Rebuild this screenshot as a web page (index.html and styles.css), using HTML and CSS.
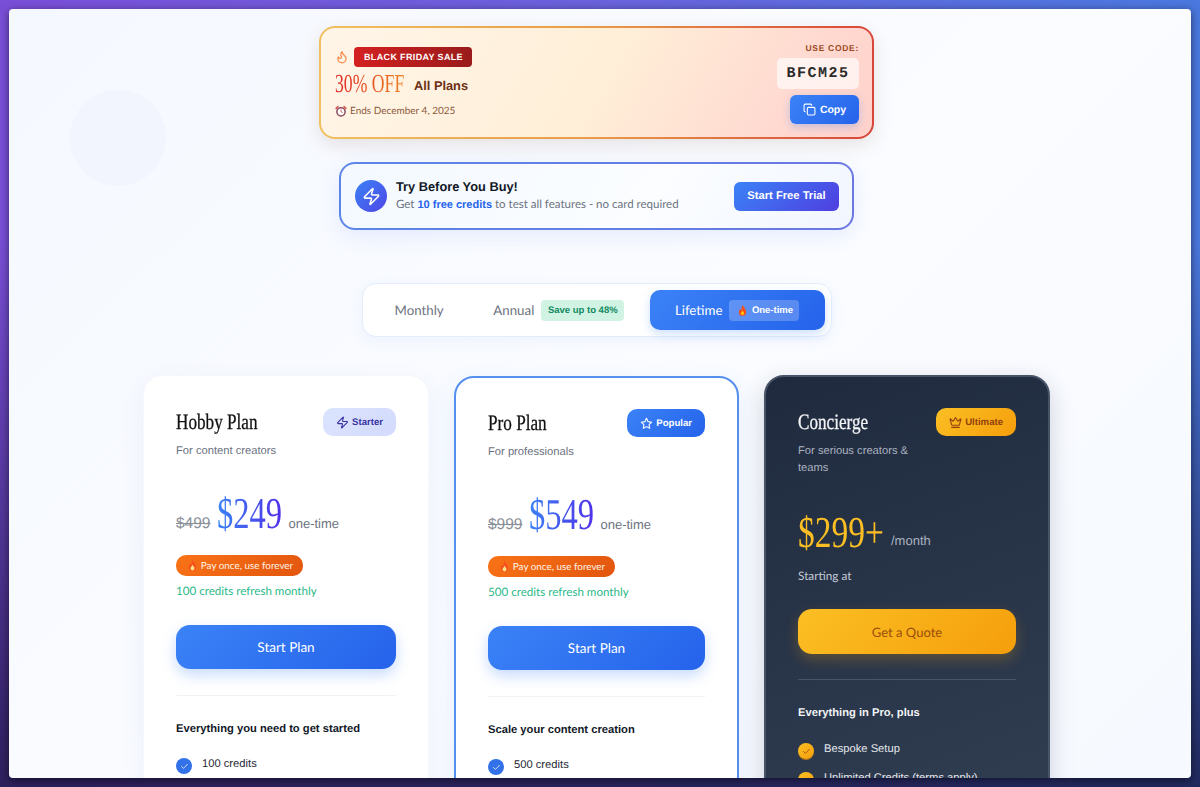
FILE: index.html
```html
<!DOCTYPE html>
<html lang="en">
<head>
    <meta charset="UTF-8">
    <meta name="viewport" content="width=device-width, initial-scale=1.0">
    <title>Pricing</title>
    <link rel="stylesheet" href="styles.css">
</head>
<body>
    <div class="window">
        <div class="bg-circle"></div>
        <div class="page">

            <div class="promo">
                <div class="promo-left">
                    <div class="promo-top">
                        <svg class="promo-flame" viewBox="0 0 24 24"><path d="M8.5 14.5A2.5 2.5 0 0 0 11 12c0-1.38-.5-2-1-3-1.07-2.14-.22-4.05 2-6 .5 2.5 2 4.9 4 6.5 2 1.6 3 3.5 3 5.5a7 7 0 1 1-14 0c0-1.15.43-2.29 1-3a2.5 2.5 0 0 0 2.500 2.500z"/></svg>
                        <span class="sale-badge">BLACK FRIDAY SALE</span>
                    </div>
                    <div class="promo-main">
                        <span class="serif-wrap off-wrap"><span class="serif off">30% OFF</span></span>
                        <span class="all-plans">All Plans</span>
                    </div>
                    <div class="promo-ends">
                        <svg class="alarm" viewBox="0 0 16 16"><circle cx="8" cy="9" r="5.500" fill="#fff" stroke="#8a4b5c" stroke-width="2"/><path d="M8 6v3l2 1" fill="none" stroke="#c0392b" stroke-width="1"/><path d="M1.500 4.500 4 2M14.500 4.500 12 2" stroke="#d9534f" stroke-width="2" stroke-linecap="round"/></svg>
                        Ends December 4, 2025
                    </div>
                </div>
                <div class="promo-right">
                    <div class="use-code">USE CODE:</div>
                    <div class="code">BFCM25</div>
                    <button class="copy-btn">
                        <svg viewBox="0 0 24 24"><rect x="8" y="8" width="14" height="14" rx="2"/><path d="M4 16c-1.100 0-2-.9-2-2V4c0-1.100.9-2 2-2h10c1.100 0 2 .9 2 2"/></svg>
                        Copy
                    </button>
                </div>
            </div>

            <div class="trial">
                <div class="trial-icon">
                    <svg viewBox="0 0 24 24"><path d="M4 14a1 1 0 0 1-.78-1.630l9.900-10.200a.5.5 0 0 1 .86.460l-1.920 6.020A1 1 0 0 0 13 10h7a1 1 0 0 1 .78 1.630l-9.900 10.200a.5.5 0 0 1-.86-.460l1.920-6.020A1 1 0 0 0 11 14z"/></svg>
                </div>
                <div class="trial-text">
                    <div class="trial-title">Try Before You Buy!</div>
                    <div class="trial-sub">Get <strong>10 free credits</strong> to test all features - no card required</div>
                </div>
                <button class="trial-btn">Start Free Trial</button>
            </div>

            <div class="tabs">
                <div class="tab tab-monthly">Monthly</div>
                <div class="tab tab-annual">Annual <span class="save-badge">Save up to 48%</span></div>
                <div class="tab tab-active">Lifetime
                    <span class="once-badge">
                        <svg class="fire" viewBox="0 0 16 16"><path d="M8 1c.5 2.500 4.500 4.500 4.500 9a4.500 4.500 0 0 1-9 0c0-2 1-3 1.500-4 .5 1 1 1.500 1.500 1.500C7 5 7 3 8 1z" fill="#f4511e"/><path d="M8 8c.5 1.300 2 2 2 3.500a2 2 0 0 1-4 0C6 10 7.500 9.500 8 8z" fill="#ffc107"/></svg>
                        One-time
                    </span>
                </div>
            </div>

            <div class="cards">
                <div class="card">
                    <div class="card-head">
                        <div class="card-name">
                            <span class="serif-wrap title-wrap"><span class="serif card-title">Hobby Plan</span></span>
                            <div class="card-desc">For content creators</div>
                        </div>
                        <span class="plan-badge badge-starter">
                            <svg viewBox="0 0 24 24"><path d="M4 14a1 1 0 0 1-.78-1.630l9.900-10.200a.5.5 0 0 1 .86.460l-1.920 6.020A1 1 0 0 0 13 10h7a1 1 0 0 1 .78 1.630l-9.900 10.200a.5.5 0 0 1-.86-.460l1.920-6.020A1 1 0 0 0 11 14z"/></svg>
                            Starter
                        </span>
                    </div>
                    <div class="price-row">
                        <span class="old-price">$499</span>
                        <span class="serif-wrap price-wrap"><span class="serif price">$249</span></span>
                        <span class="period">one-time</span>
                    </div>
                    <div class="pay-pill">
                        <svg class="fire" viewBox="0 0 16 16"><path d="M8 1c.5 2.500 4.500 4.500 4.500 9a4.500 4.500 0 0 1-9 0c0-2 1-3 1.500-4 .5 1 1 1.500 1.500 1.500C7 5 7 3 8 1z" fill="#f4511e"/><path d="M8 7c.5 1.500 2.500 2.500 2.500 4.500a2.500 2.500 0 0 1-5 0C5.500 10 7.500 9 8 7z" fill="#ffe082"/></svg>
                        Pay once, use forever
                    </div>
                    <div class="refresh">100 credits refresh monthly</div>
                    <button class="plan-btn">Start Plan</button>
                    <div class="divider"></div>
                    <div class="feat-head">Everything you need to get started</div>
                    <ul class="feats">
                        <li><span class="check"><svg viewBox="0 0 24 24"><path d="M20 6 9 17l-5-5"/></svg></span>100 credits</li>
                    </ul>
                </div>

                <div class="card card-pro">
                    <div class="card-head">
                        <div class="card-name">
                            <span class="serif-wrap title-wrap-pro"><span class="serif card-title">Pro Plan</span></span>
                            <div class="card-desc">For professionals</div>
                        </div>
                        <span class="plan-badge badge-popular">
                            <svg viewBox="0 0 24 24"><path d="M12 2.500l2.950 6.100 6.650.95-4.800 4.700 1.130 6.650L12 17.750 6.070 20.900l1.130-6.650-4.800-4.700 6.650-.95z"/></svg>
                            Popular
                        </span>
                    </div>
                    <div class="price-row">
                        <span class="old-price">$999</span>
                        <span class="serif-wrap price-wrap"><span class="serif price">$549</span></span>
                        <span class="period">one-time</span>
                    </div>
                    <div class="pay-pill">
                        <svg class="fire" viewBox="0 0 16 16"><path d="M8 1c.5 2.500 4.500 4.500 4.500 9a4.500 4.500 0 0 1-9 0c0-2 1-3 1.500-4 .5 1 1 1.500 1.500 1.500C7 5 7 3 8 1z" fill="#f4511e"/><path d="M8 7c.5 1.500 2.500 2.500 2.500 4.500a2.500 2.500 0 0 1-5 0C5.500 10 7.500 9 8 7z" fill="#ffe082"/></svg>
                        Pay once, use forever
                    </div>
                    <div class="refresh">500 credits refresh monthly</div>
                    <button class="plan-btn">Start Plan</button>
                    <div class="divider"></div>
                    <div class="feat-head">Scale your content creation</div>
                    <ul class="feats">
                        <li><span class="check"><svg viewBox="0 0 24 24"><path d="M20 6 9 17l-5-5"/></svg></span>500 credits</li>
                    </ul>
                </div>

                <div class="card card-dark">
                    <div class="card-head">
                        <div class="card-name">
                            <span class="serif-wrap title-wrap-dark"><span class="serif card-title">Concierge</span></span>
                            <div class="card-desc">For serious creators &amp; teams</div>
                        </div>
                        <span class="plan-badge badge-ultimate">
                            <svg viewBox="0 0 24 24"><path d="M11.560 3.270a.5.5 0 0 1 .88 0l2.950 5.600a1 1 0 0 0 1.520.3l4.280-3.670a.5.5 0 0 1 .8.520l-2.830 10.240a1 1 0 0 1-.96.740H5.800a1 1 0 0 1-.96-.74L2.010 6.020a.5.5 0 0 1 .8-.52l4.280 3.670a1 1 0 0 0 1.520-.3z"/><path d="M5 21h14"/></svg>
                            Ultimate
                        </span>
                    </div>
                    <div class="price-row price-row-dark">
                        <span class="serif-wrap price-wrap-dark"><span class="serif price price-gold">$299+</span></span>
                        <span class="period">/month</span>
                    </div>
                    <div class="starting">Starting at</div>
                    <button class="plan-btn quote-btn">Get a Quote</button>
                    <div class="divider"></div>
                    <div class="feat-head">Everything in Pro, plus</div>
                    <ul class="feats">
                        <li><span class="check"><svg viewBox="0 0 24 24"><path d="M20 6 9 17l-5-5"/></svg></span>Bespoke Setup</li>
                        <li><span class="check"><svg viewBox="0 0 24 24"><path d="M20 6 9 17l-5-5"/></svg></span>Unlimited Credits (terms apply)</li>
                    </ul>
                </div>
            </div>

        </div>
    </div>
</body>
</html>
```

FILE: styles.css
```css
* {
    box-sizing: border-box;
}
html, body {
    height: 787px;
    margin: 0;
    overflow: hidden;
}
body {
    padding: 9px;
    background: linear-gradient(180deg, rgba(20, 15, 50, 0) 30%, rgba(20, 15, 50, 0.75) 100%), linear-gradient(90deg, #7a4fd8 0%, #6a62dc 50%, #4a78de 100%);
    font-family: "Liberation Sans", Arial, sans-serif;
    color: #111827;
    text-rendering: geometricPrecision;
}
button {
    border: none;
    cursor: pointer;
    font-family: inherit;
    text-rendering: inherit;
}

.window {
    position: relative;
    height: 769px;
    overflow: hidden;
    border-radius: 4px;
    background: linear-gradient(135deg, #f5f8ff 0%, #fafcff 55%, #f6f9ff 100%);
    box-shadow: 0 2px 8px rgba(0, 0, 0, 0.55);
}
.bg-circle {
    position: absolute;
    left: 61px;
    top: 81px;
    width: 96px;
    height: 96px;
    border-radius: 50%;
    background: #f2f4fe;
}
.page {
    position: relative;
    width: 1175px;
    padding-top: 17px;
    display: flex;
    flex-direction: column;
    align-items: center;
}

/* condensed serif display text */
.serif-wrap {
    display: inline-block;
}
.serif {
    display: inline-block;
    font-family: "Liberation Serif", "Times New Roman", serif;
    transform-origin: left center;
    white-space: nowrap;
}

/* black friday banner */
.promo {
    width: 555px;
    height: 113px;
    padding: 19px 13px 0 14px;
    display: flex;
    justify-content: space-between;
    border: 2px solid transparent;
    border-radius: 16px;
    background: linear-gradient(120deg, #fff5e8 0%, #ffefd8 50%, #ffd8d0 85%, #ffd2cb 100%) padding-box, linear-gradient(90deg, #f0c060 0%, #e99a48 50%, #d8463a 100%) border-box;
    box-shadow: 0 6px 18px rgba(120, 80, 60, 0.14);
}
.promo-top {
    display: flex;
    align-items: center;
    gap: 5px;
    height: 20px;
}
.promo-flame {
    width: 14px;
    height: 14px;
    fill: none;
    stroke: #f98a4a;
    stroke-width: 2.200;
    stroke-linecap: round;
    stroke-linejoin: round;
}
.sale-badge {
    height: 20px;
    padding: 0 9px 0 10px;
    display: flex;
    align-items: center;
    border-radius: 4px;
    background: linear-gradient(90deg, #d42020, #991b1b);
    color: #fff;
    font-size: 9px;
    font-weight: bold;
    letter-spacing: 0.35px;
}
.promo-main {
    height: 31px;
    margin-top: 1px;
    display: flex;
    align-items: center;
}
.off-wrap {
    width: 69px;
    margin-right: 10px;
}
.off {
    font-size: 26px;
    transform: scaleX(0.68);
    background: linear-gradient(90deg, #dc2626, #f08020);
    -webkit-background-clip: text;
    background-clip: text;
    color: transparent;
}
.all-plans {
    margin-top: 4px;
    font-size: 12.800px;
    font-weight: bold;
    color: #6b2f12;
}
.promo-ends {
    margin-top: 6px;
    display: flex;
    align-items: center;
    gap: 3px;
    font-family: "Lato", "Noto Sans", sans-serif;
    font-size: 10px;
    color: #8b5a3c;
}
.alarm {
    width: 12px;
    height: 12px;
}
.promo-right {
    display: flex;
    flex-direction: column;
    align-items: flex-end;
}
.use-code {
    margin-top: -4px;
    font-size: 8.500px;
    font-weight: bold;
    letter-spacing: 0.7px;
    color: #9a4a1c;
}
.code {
    width: 82px;
    height: 31px;
    margin-top: 5px;
    display: flex;
    align-items: center;
    justify-content: center;
    border-radius: 5px;
    background: rgba(255, 255, 255, 0.65);
    font-family: "Liberation Mono", "Courier New", monospace;
    font-size: 15px;
    font-weight: bold;
    letter-spacing: 1.500px;
    color: #2b2b2b;
}
.copy-btn {
    width: 69px;
    height: 29px;
    margin-top: 6px;
    display: flex;
    align-items: center;
    justify-content: center;
    gap: 4px;
    border-radius: 6px;
    background: linear-gradient(135deg, #3b82f6, #2563eb);
    color: #fff;
    font-size: 10.500px;
    font-weight: bold;
    box-shadow: 0 3px 8px rgba(59, 130, 246, 0.3);
}
.copy-btn svg {
    width: 13px;
    height: 13px;
    fill: none;
    stroke: #fff;
    stroke-width: 2;
    stroke-linecap: round;
    stroke-linejoin: round;
}

/* free trial banner */
.trial {
    width: 515px;
    height: 68px;
    margin-top: 23px;
    padding: 0 13px 0 14px;
    display: flex;
    align-items: center;
    border: 2px solid transparent;
    border-radius: 16px;
    background: linear-gradient(120deg, #f3f9ff, #fbfdff 60%, #f2f6ff) padding-box, linear-gradient(90deg, #5c86e6, #6a78e0) border-box;
    box-shadow: 0 6px 20px rgba(80, 120, 240, 0.12);
}
.trial-icon {
    width: 32px;
    height: 32px;
    flex-shrink: 0;
    display: flex;
    align-items: center;
    justify-content: center;
    border-radius: 50%;
    background: linear-gradient(135deg, #3b82f6, #4f46e5);
}
.trial-icon svg {
    width: 19px;
    height: 19px;
    fill: none;
    stroke: #fff;
    stroke-width: 2;
    stroke-linecap: round;
    stroke-linejoin: round;
}
.trial-text {
    flex: 1;
    margin-left: 9px;
    margin-bottom: 2px;
}
.trial-title {
    font-size: 12.800px;
    font-weight: bold;
    color: #111827;
}
.trial-sub {
    margin-top: 4px;
    font-family: "Lato", "Noto Sans", sans-serif;
    font-size: 11.500px;
    color: #6b7280;
}
.trial-sub strong {
    font-family: "Liberation Sans", Arial, sans-serif;
    font-size: 11px;
    color: #2563eb;
}
.trial-btn {
    width: 105px;
    height: 29px;
    border-radius: 6px;
    background: linear-gradient(135deg, #3b82f6, #4f3fe0);
    color: #fff;
    font-size: 11.200px;
    font-weight: bold;
}

/* billing tabs */
.tabs {
    width: 470px;
    height: 54px;
    margin-top: 53px;
    padding: 0 6px;
    display: flex;
    align-items: center;
    border: 1px solid #e3edfb;
    border-radius: 14px;
    background: #fff;
    box-shadow: 0 4px 14px rgba(90, 130, 240, 0.07);
    font-family: "Lato", "Noto Sans", sans-serif;
    font-size: 13.300px;
    color: #6b7280;
}
.tab {
    height: 40px;
    display: flex;
    align-items: center;
}
.tab-monthly {
    width: 106px;
    padding-left: 26px;
    padding-bottom: 1px;
}
.tab-annual {
    width: 176px;
    padding-left: 19px;
    gap: 7px;
}
.save-badge {
    height: 21px;
    width: 83px;
    display: flex;
    align-items: center;
    justify-content: center;
    border-radius: 4px;
    background: #d1f3e4;
    color: #0f8a5f;
    font-family: "Liberation Sans", Arial, sans-serif;
    font-size: 9.500px;
    font-weight: bold;
}
.tab-active {
    width: 175px;
    padding-left: 25px;
    gap: 7px;
    border-radius: 10px;
    background: linear-gradient(135deg, #3b82f6, #2563eb);
    color: #fff;
    box-shadow: 0 4px 10px rgba(59, 130, 246, 0.25);
}
.once-badge {
    height: 21px;
    width: 70px;
    display: flex;
    align-items: center;
    justify-content: center;
    gap: 3px;
    border-radius: 4px;
    background: rgba(255, 255, 255, 0.22);
    font-family: "Liberation Sans", Arial, sans-serif;
    font-size: 9.500px;
    font-weight: bold;
}
.fire {
    width: 13px;
    height: 13px;
    flex-shrink: 0;
}

/* plan cards */
.cards {
    margin-top: 38px;
    display: flex;
    align-items: flex-start;
    gap: 25px;
}
.card {
    width: 286px;
    height: 520px;
    padding: 32px;
    border: 1px solid #f7f8fb;
    border-radius: 20px;
    background: #fff;
    box-shadow: 0 8px 24px rgba(80, 100, 180, 0.08);
}
.card-pro {
    width: 285px;
    margin-top: 1px;
    padding: 31px 32px;
    border: 2px solid #5590ee;
    box-shadow: 0 8px 24px rgba(59, 130, 246, 0.1);
}
.card-dark {
    border: 2px solid #475467;
    padding: 31px 32px;
    background: linear-gradient(160deg, #1f2a3e 0%, #334155 100%);
    box-shadow: 0 8px 24px rgba(30, 40, 70, 0.2);
}
.card-head {
    height: 72px;
    display: flex;
    justify-content: space-between;
    align-items: flex-start;
}
.card-name {
    width: 122px;
}
.card-title {
    font-size: 22px;
    line-height: 28px;
    transform: scaleX(0.78);
    color: #111;
    -webkit-text-stroke: 0.3px currentColor;
}
.title-wrap {
    width: 82px;
}
.title-wrap-pro {
    width: 60px;
}
.title-wrap-dark {
    width: 68px;
}
.card-desc {
    margin-top: 7px;
    font-size: 11.200px;
    line-height: 17px;
    color: #6b7280;
}
.plan-badge {
    height: 28px;
    padding: 0 13px;
    display: flex;
    align-items: center;
    gap: 3px;
    border-radius: 10px;
    font-size: 9.600px;
    font-weight: bold;
}
.plan-badge svg {
    width: 13px;
    height: 13px;
    fill: none;
    stroke: currentColor;
    stroke-width: 2;
    stroke-linecap: round;
    stroke-linejoin: round;
}
.badge-starter {
    background: linear-gradient(135deg, #dbe4fe, #d3dafc);
    color: #3730a3;
}
.badge-popular {
    background: linear-gradient(135deg, #3b82f6, #2563eb);
    color: #fff;
}
.badge-ultimate {
    background: linear-gradient(135deg, #fbbf24, #f59e0b);
    color: #92400e;
}
.price-row {
    height: 52px;
    margin-top: 8px;
    display: flex;
    align-items: baseline;
}
.old-price {
    margin-right: 7px;
    font-size: 15.500px;
    color: #8a8f98;
    text-decoration: line-through;
}
.price {
    font-size: 44px;
    line-height: 52px;
    transform: scaleX(0.74);
    background: linear-gradient(90deg, #3b82f6, #4f30e8);
    -webkit-background-clip: text;
    background-clip: text;
    color: transparent;
}
.price-wrap {
    width: 65px;
    margin-right: 6px;
}
.period {
    font-size: 13px;
    color: #6b7280;
}
.pay-pill {
    width: 127px;
    height: 21px;
    margin-top: 15px;
    display: flex;
    align-items: center;
    justify-content: center;
    gap: 2px;
    border-radius: 10px;
    background: linear-gradient(135deg, #f97316, #e2550f);
    color: #fff3e6;
    font-family: "Lato", "Noto Sans", sans-serif;
    font-size: 9.900px;
}
.refresh {
    margin-top: 8px;
    font-family: "Lato", "Noto Sans", sans-serif;
    font-size: 11.600px;
    line-height: 15px;
    color: #2bb98a;
}
.plan-btn {
    width: 100%;
    height: 44px;
    margin-top: 26px;
    border-radius: 14px;
    background: linear-gradient(135deg, #3b82f6, #2563eb);
    color: #fff;
    font-family: "Lato", "Noto Sans", sans-serif;
    font-size: 13.500px;
    box-shadow: 0 6px 14px rgba(59, 130, 246, 0.28);
}
.divider {
    height: 1px;
    margin-top: 26px;
    background: #f0f2f5;
}
.feat-head {
    margin-top: 26px;
    font-size: 11.200px;
    font-weight: bold;
    line-height: 15px;
    color: #111827;
}
.feats {
    margin: 20px 0 0;
    padding: 0;
    list-style: none;
    font-size: 11.200px;
    color: #1f2937;
}
.feats li {
    height: 29px;
    display: flex;
    gap: 10px;
    line-height: 14px;
}
.check {
    width: 16px;
    height: 16px;
    margin-top: 1px;
    flex-shrink: 0;
    display: flex;
    align-items: center;
    justify-content: center;
    border-radius: 50%;
    background: #3271e8;
}
.check svg {
    width: 9px;
    height: 9px;
    fill: none;
    stroke: #fff;
    stroke-width: 2;
    stroke-linecap: round;
    stroke-linejoin: round;
}

/* concierge overrides */
.card-dark .card-title {
    color: #f3f4f6;
}
.card-dark .card-desc {
    color: #aab2c0;
}
.card-dark .card-name {
    width: 118px;
}
.price-row-dark {
    margin-top: 27px;
}
.price-gold {
    transform: scaleX(0.76);
    background: none;
    color: #fbbf24;
    -webkit-background-clip: initial;
    background-clip: initial;
}
.price-wrap-dark {
    width: 85px;
    margin-right: 8px;
}
.card-dark .period {
    color: #aab2c0;
    transform: translateY(-2px);
}
.starting {
    margin-top: 9px;
    font-family: "Lato", "Noto Sans", sans-serif;
    font-size: 11.800px;
    line-height: 15px;
    color: #c3cad6;
}
.quote-btn {
    height: 45px;
    margin-top: 26px;
    background: linear-gradient(135deg, #fbbf24, #f59e0b);
    color: #9a4e0c;
    font-size: 13px;
    box-shadow: 0 6px 14px rgba(245, 158, 11, 0.25);
}
.card-dark .divider {
    margin-top: 25px;
    background: #475569;
}
.card-dark .feat-head {
    color: #f3f4f6;
}
.card-dark .feats {
    color: #e5e7eb;
    margin-top: 21px;
}
.card-dark .check {
    background: linear-gradient(135deg, #fbbf24, #f59e0b);
    box-shadow: 0 1px 0 #b8740a;
}
.card-dark .check svg {
    stroke: #92400e;
}
```
